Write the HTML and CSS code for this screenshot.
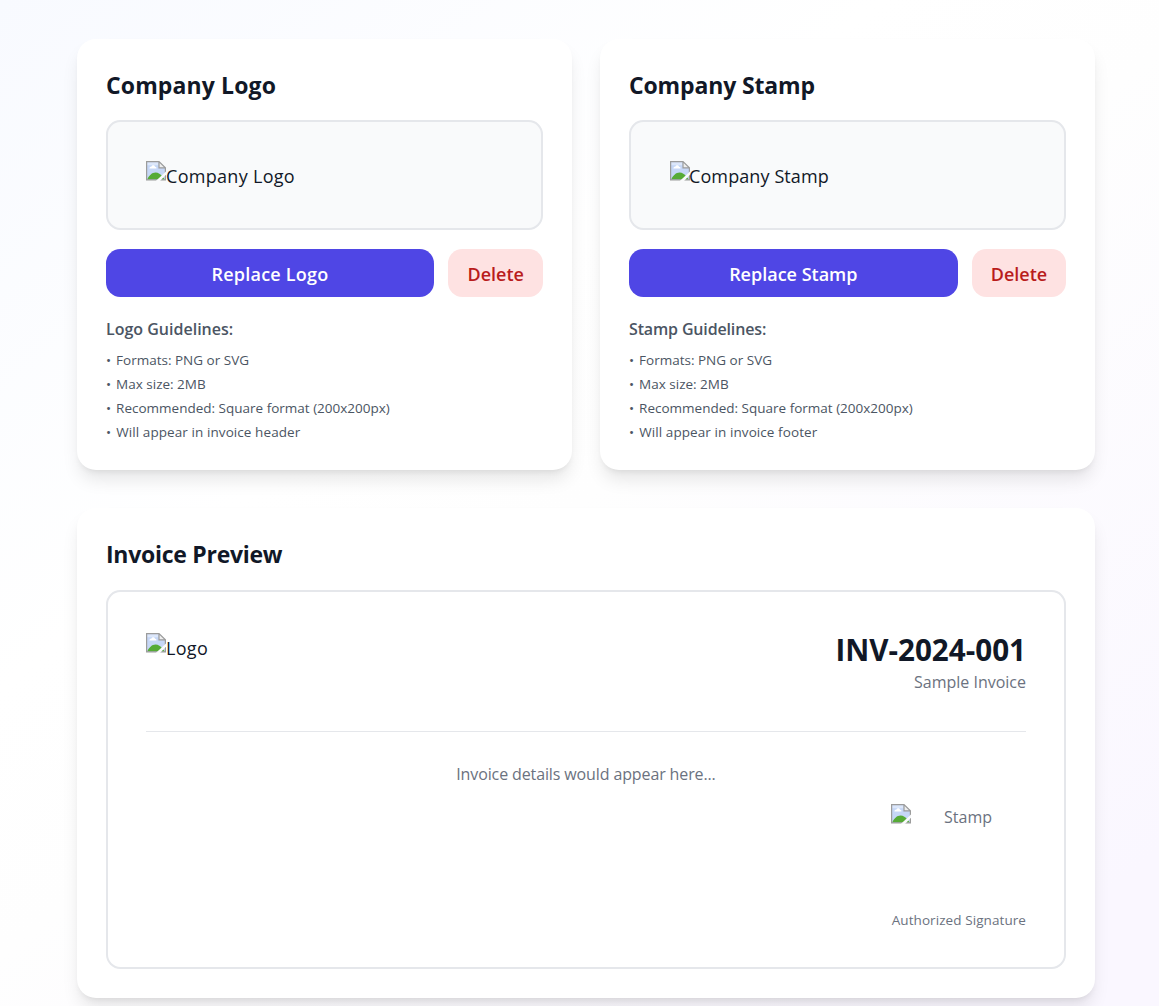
FILE: index.html
```html
<!DOCTYPE html>
<html lang="en">
<head>
<meta charset="utf-8">
<title>Company Branding</title>
<link rel="stylesheet" href="styles.css">
</head>
<body>
<svg class="defs" aria-hidden="true">
  <symbol id="broken" viewBox="0 0 20 20">
    <path d="M.6.6H13l6.4 6.2v12.1H.6z" fill="#c6d7f7"/>
    <path d="M1.2 1.2h11.2v3H1.2z" fill="#dce7fb"/>
    <path d="M3.4 7.3c0-1.1 1-1.8 1.9-1.5.4-2 3.3-2 3.7-.1 1.2-.1 1.9 1 1.4 1.9H3.4z" fill="#fff"/>
    <path d="M1.2 18.4c2-4 4.8-6.8 8.3-6.8 3 0 5.1 2 6.5 3.4l2.8 3.4z" fill="#56ab36"/>
    <path d="M13 .6v6.2h6.4z" fill="#eee"/>
    <path d="M13 .6H.6v18.3h18.8V6.8L13 .6v6.2h6.4" fill="none" stroke="#9c9c9c" stroke-width="1.2"/>
    <path d="M20 10.6v3.2l-6 6.2h-4.2z" fill="#f9fafb"/>
  </symbol>
</svg>
<main class="page">
  <div class="uploads">
    <section class="card logo-card">
      <h2 class="title">Company Logo</h2>
      <div class="dropzone"><svg class="broken"><use href="#broken"/></svg><span class="alt">Company Logo</span></div>
      <div class="actions">
        <button class="btn primary">Replace Logo</button>
        <button class="btn danger">Delete</button>
      </div>
      <h3 class="subtitle">Logo Guidelines:</h3>
      <ul class="rules">
        <li><span class="bullet">•</span> Formats: PNG or SVG</li>
        <li><span class="bullet">•</span> Max size: 2MB</li>
        <li><span class="bullet">•</span> Recommended: Square format (200x200px)</li>
        <li><span class="bullet">•</span> Will appear in invoice header</li>
      </ul>
    </section>
    <section class="card stamp-card">
      <h2 class="title">Company Stamp</h2>
      <div class="dropzone"><svg class="broken"><use href="#broken"/></svg><span class="alt">Company Stamp</span></div>
      <div class="actions">
        <button class="btn primary">Replace Stamp</button>
        <button class="btn danger">Delete</button>
      </div>
      <h3 class="subtitle">Stamp Guidelines:</h3>
      <ul class="rules">
        <li><span class="bullet">•</span> Formats: PNG or SVG</li>
        <li><span class="bullet">•</span> Max size: 2MB</li>
        <li><span class="bullet">•</span> Recommended: Square format (200x200px)</li>
        <li><span class="bullet">•</span> Will appear in invoice footer</li>
      </ul>
    </section>
  </div>
  <section class="card preview">
    <h2 class="title">Invoice Preview</h2>
    <div class="invoice">
      <header class="invoice-head">
        <div class="logo"><svg class="broken"><use href="#broken"/></svg><span class="alt">Logo</span></div>
        <div class="meta">
          <div class="number">INV-2024-001</div>
          <div class="sample">Sample Invoice</div>
        </div>
      </header>
      <p class="details">Invoice details would appear here...</p>
      <div class="signature">
        <div class="stamp"><svg class="broken"><use href="#broken"/></svg><span class="stamp-alt">Stamp</span></div>
        <div class="signed">Authorized Signature</div>
      </div>
    </div>
  </section>
</main>
</body>
</html>
```
FILE: styles.css
```css
* { box-sizing: border-box; margin: 0; padding: 0; }
html { height: 100%; overflow: hidden; }
body {
  height: 100%;
  overflow: hidden;
  font-family: "Segoe UI", "Open Sans", "Noto Sans", sans-serif;
  color: #111827;
  background: linear-gradient(142deg, #f8faff 0%, #fff 36%, #fefefe 50%, #faf7ff 92%);
}
.defs { position: absolute; width: 0; height: 0; }
.page { width: 1018px; margin: 39px 0 0 77px; }
.uploads { display: grid; grid-template-columns: 1fr 1fr; gap: 28px; margin-bottom: 38px; }
.card {
  padding: 29px;
  border-radius: 19px;
  background: #fff;
  box-shadow: 0 12px 18px -3.6px rgba(0,0,0,.1), 0 4.8px 7.2px -4.8px rgba(0,0,0,.1);
}
.uploads .card { height: 431px; }
.preview { height: 490px; }
.title { height: 34px; margin-bottom: 18px; line-height: 34px; font-size: 23px; font-weight: 700; letter-spacing: .12px; white-space: nowrap; }
.stamp-card .title { letter-spacing: -.15px; }
.preview .title { margin-bottom: 19px; letter-spacing: -.27px; }
.dropzone {
  display: flex;
  height: 110px;
  padding: 39px 38px 0;
  border: 2px solid #e5e7eb;
  border-radius: 14.4px;
  background: #f9fafb;
}
.stamp-card .dropzone { padding-left: 39px; }
.broken { display: block; flex: none; width: 20px; height: 20px; }
.alt { font-size: 18px; line-height: 30px; letter-spacing: .3px; white-space: nowrap; }
.stamp-card .alt { margin-left: -1px; letter-spacing: .1px; }
.actions { display: flex; gap: 14.4px; margin-top: 19px; }
.btn { height: 48px; border: 0; border-radius: 14.4px; font: 600 18px/50px "Segoe UI", "Open Sans", "Noto Sans", sans-serif; }
.primary { flex: 1; background: #4f46e5; color: #fff; }
.logo-card .primary { letter-spacing: .22px; }
.danger { width: 94.6px; background: #fee2e2; color: #b91c1c; }
.stamp-card .danger { width: 94px; }
.subtitle { margin-top: 20px; line-height: 24px; font-size: 16px; font-weight: 600; color: #4b5563; }
.stamp-card .subtitle { letter-spacing: -.15px; }
.rules { margin-top: 7px; list-style: none; font-size: 13.5px; line-height: 24px; color: #4b5563; }
.rules li:last-child { letter-spacing: .08px; }
.bullet { margin-right: 1.5px; }
.invoice { height: 379px; padding: 38px; border: 2px solid #e5e7eb; border-radius: 14.4px; }
.invoice-head { display: flex; justify-content: space-between; height: 102px; border-bottom: 1px solid #e5e7eb; }
.logo { display: flex; padding-top: 3px; }
.meta { text-align: right; }
.number { margin-top: 1px; line-height: 38px; font-size: 29.6px; font-weight: 700; }
.sample { margin-top: 1px; line-height: 24px; font-size: 16px; color: #6b7280; }
.details { margin-top: 30px; line-height: 24px; font-size: 16px; letter-spacing: -.12px; text-align: center; color: #6b7280; }
.signature { width: 135px; margin: 18px 0 0 auto; color: #6b7280; }
.stamp { display: flex; height: 104px; }
.stamp-alt { flex: 1; padding-right: 1px; line-height: 26px; font-size: 16px; text-align: center; }
.signed { line-height: 24px; font-size: 13.5px; letter-spacing: .08px; text-align: right; white-space: nowrap; }
```
